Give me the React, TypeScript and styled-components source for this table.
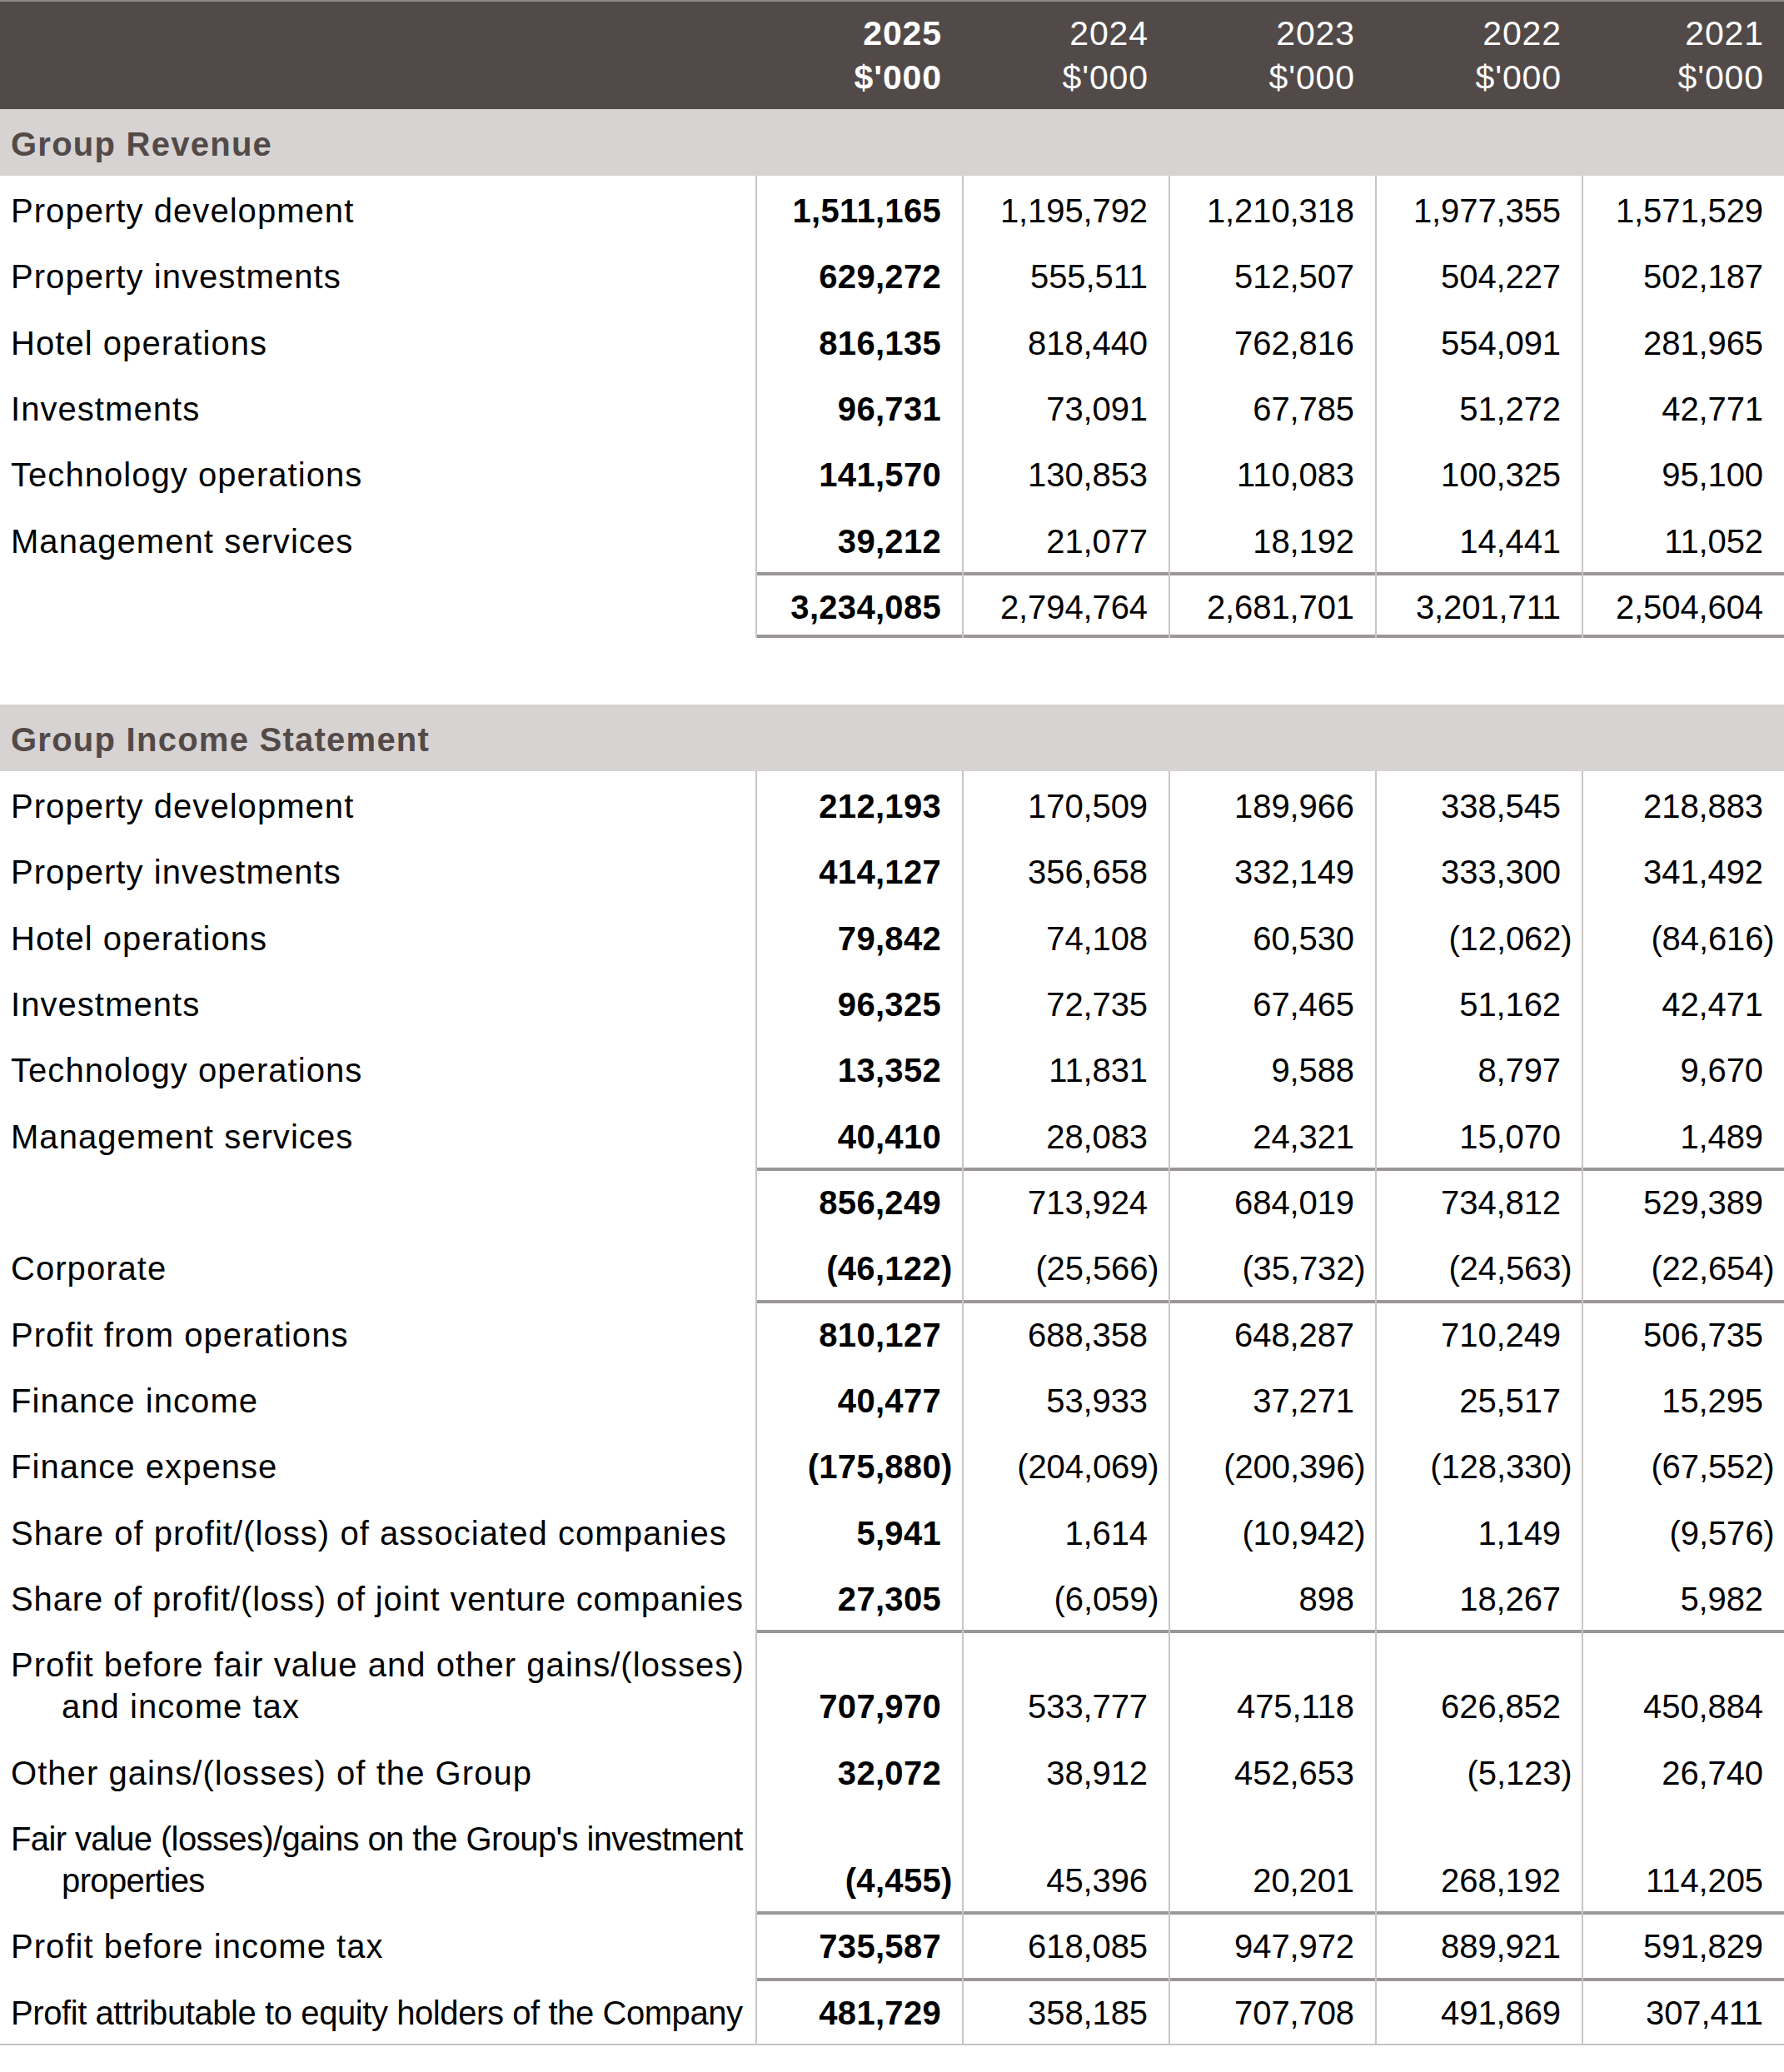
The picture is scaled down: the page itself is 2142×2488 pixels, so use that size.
import React from 'react';
import styled, { createGlobalStyle } from 'styled-components';

const GlobalStyle = createGlobalStyle`
  html, body { margin: 0; padding: 0; background: #ffffff; }
  body { font-family: "Liberation Sans", Arial, Helvetica, sans-serif; color: #000; }
`;

const COLS = '907px repeat(4, 248px) 243px';
const RULE = '#9b9796';
const GRID_LINE = '#c9c6c5';

type RowData = {
  label: string[];
  values: string[];
  ruleTop?: boolean;
  ruleBottom?: boolean;
  spacing?: number;
};

const revenue: RowData[] = [
  { label: ['Property development'], values: ['1,511,165', '1,195,792', '1,210,318', '1,977,355', '1,571,529'] },
  { label: ['Property investments'], values: ['629,272', '555,511', '512,507', '504,227', '502,187'] },
  { label: ['Hotel operations'], values: ['816,135', '818,440', '762,816', '554,091', '281,965'] },
  { label: ['Investments'], values: ['96,731', '73,091', '67,785', '51,272', '42,771'] },
  { label: ['Technology operations'], values: ['141,570', '130,853', '110,083', '100,325', '95,100'] },
  { label: ['Management services'], values: ['39,212', '21,077', '18,192', '14,441', '11,052'] },
  { label: [''], values: ['3,234,085', '2,794,764', '2,681,701', '3,201,711', '2,504,604'], ruleTop: true, ruleBottom: true },
];

const income: RowData[] = [
  { label: ['Property development'], values: ['212,193', '170,509', '189,966', '338,545', '218,883'] },
  { label: ['Property investments'], values: ['414,127', '356,658', '332,149', '333,300', '341,492'] },
  { label: ['Hotel operations'], values: ['79,842', '74,108', '60,530', '(12,062)', '(84,616)'] },
  { label: ['Investments'], values: ['96,325', '72,735', '67,465', '51,162', '42,471'] },
  { label: ['Technology operations'], values: ['13,352', '11,831', '9,588', '8,797', '9,670'] },
  { label: ['Management services'], values: ['40,410', '28,083', '24,321', '15,070', '1,489'] },
  { label: [''], values: ['856,249', '713,924', '684,019', '734,812', '529,389'], ruleTop: true },
  { label: ['Corporate'], values: ['(46,122)', '(25,566)', '(35,732)', '(24,563)', '(22,654)'] },
  { label: ['Profit from operations'], values: ['810,127', '688,358', '648,287', '710,249', '506,735'], ruleTop: true },
  { label: ['Finance income'], values: ['40,477', '53,933', '37,271', '25,517', '15,295'] },
  { label: ['Finance expense'], values: ['(175,880)', '(204,069)', '(200,396)', '(128,330)', '(67,552)'] },
  { label: ['Share of profit/(loss) of associated companies'], values: ['5,941', '1,614', '(10,942)', '1,149', '(9,576)'] },
  { label: ['Share of profit/(loss) of joint venture companies'], values: ['27,305', '(6,059)', '898', '18,267', '5,982'], spacing: 0.85 },
  { label: ['Profit before fair value and other gains/(losses)', 'and income tax'], values: ['707,970', '533,777', '475,118', '626,852', '450,884'], ruleTop: true, spacing: 1.05 },
  { label: ['Other gains/(losses) of the Group'], values: ['32,072', '38,912', '452,653', '(5,123)', '26,740'] },
  { label: ["Fair value (losses)/gains on the Group's investment", 'properties'], values: ['(4,455)', '45,396', '20,201', '268,192', '114,205'], spacing: -0.62 },
  { label: ['Profit before income tax'], values: ['735,587', '618,085', '947,972', '889,921', '591,829'], ruleTop: true },
  { label: ['Profit attributable to equity holders of the Company'], values: ['481,729', '358,185', '707,708', '491,869', '307,411'], ruleTop: true, spacing: -0.42 },
];

const years = ['2025', '2024', '2023', '2022', '2021'];

const Page = styled.div`
  width: 2142px;
  display: flex;
  flex-direction: column;
`;

const Table = styled.div`
  display: flex;
  flex-direction: column;
  border-bottom: 2px solid #c6c3c2;
`;

const HeaderBar = styled.div`
  display: grid;
  grid-template-columns: ${COLS};
  height: 131px;
  box-sizing: border-box;
  padding-top: 12px;
  background: #524a48;
  border-top: 2px solid #8d8887;
  color: #ffffff;
`;

const HeaderCell = styled.div<{ $bold?: boolean }>`
  display: flex;
  flex-direction: column;
  align-items: flex-end;
  padding-right: 24px;
  font-size: 41px;
  line-height: 53px;
  letter-spacing: 0.9px;
  font-weight: ${(p) => (p.$bold ? 700 : 400)};
`;

const Band = styled.div`
  height: 80px;
  box-sizing: border-box;
  padding: 17px 13px 0;
  background: #d6d3d2;
  color: #534a48;
  font-size: 40px;
  line-height: 50px;
  font-weight: 700;
  letter-spacing: 1.25px;
`;

const Gap = styled.div`
  height: 79.7px;
`;

const Row = styled.div`
  display: grid;
  grid-template-columns: ${COLS};
  min-height: 79.33px;
`;

const Label = styled.div<{ $spacing: number }>`
  padding: 17px 0 12.33px 13px;
  font-size: 40px;
  line-height: 50px;
  letter-spacing: ${(p) => p.$spacing}px;
  white-space: nowrap;
`;

const LabelLine = styled.span<{ $indent?: boolean }>`
  display: block;
  padding-left: ${(p) => (p.$indent ? '61px' : '0')};
`;

const Value = styled.div<{ $bold?: boolean; $ruleTop?: boolean; $ruleBottom?: boolean }>`
  display: flex;
  align-items: flex-end;
  justify-content: flex-end;
  padding: 17px 25px 12.33px 0;
  font-size: 40px;
  line-height: 50px;
  letter-spacing: ${(p) => (p.$bold ? '0.3px' : '-0.1px')};
  font-weight: ${(p) => (p.$bold ? 700 : 400)};
  white-space: nowrap;
  box-shadow: inset 2px 0 0 ${GRID_LINE}
    ${(p) => (p.$ruleTop ? `, inset 0 4px 0 ${RULE}` : '')}
    ${(p) => (p.$ruleBottom ? `, inset 0 -4px 0 ${RULE}` : '')};
`;

const Hang = styled.span`
  margin-right: -0.34em;
`;

function Num({ text }: { text: string }) {
  if (text.endsWith(')')) {
    return (
      <span>
        {text.slice(0, -1)}
        <Hang>)</Hang>
      </span>
    );
  }
  return <span>{text}</span>;
}

function DataRow({ row }: { row: RowData }) {
  return (
    <Row>
      <Label $spacing={row.spacing ?? 1.05}>
        {row.label.map((l, i) => (
          <LabelLine key={i} $indent={i > 0}>
            {l || '\u00a0'}
          </LabelLine>
        ))}
      </Label>
      {row.values.map((v, i) => (
        <Value key={i} $bold={i === 0} $ruleTop={row.ruleTop} $ruleBottom={row.ruleBottom}>
          <Num text={v} />
        </Value>
      ))}
    </Row>
  );
}

export default function App() {
  return (
    <>
      <GlobalStyle />
      <Page>
        <Table>
          <HeaderBar>
            <div />
            {years.map((y, i) => (
              <HeaderCell key={y} $bold={i === 0}>
                <span>{y}</span>
                <span>$'000</span>
              </HeaderCell>
            ))}
          </HeaderBar>
          <Band>Group Revenue</Band>
          {revenue.map((r, i) => (
            <DataRow key={i} row={r} />
          ))}
          <Gap />
          <Band>Group Income Statement</Band>
          {income.map((r, i) => (
            <DataRow key={i} row={r} />
          ))}
        </Table>
      </Page>
    </>
  );
}
